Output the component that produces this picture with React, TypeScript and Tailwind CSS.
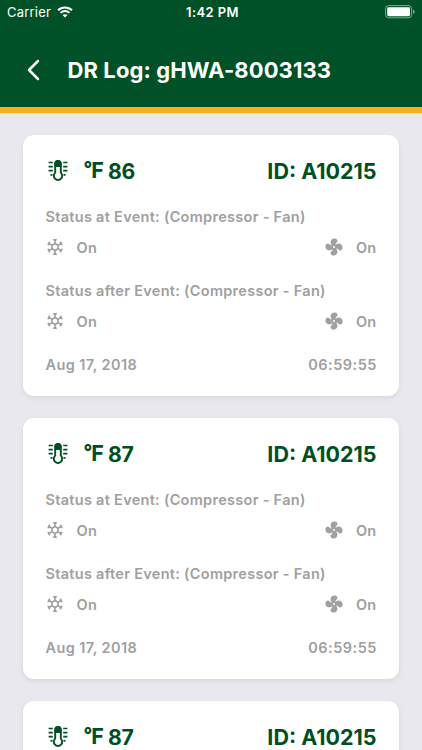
type LogEntry = { temp: number; id: string; date: string; time: string };

const entries: LogEntry[] = [
  { temp: 86, id: "A10215", date: "Aug 17, 2018", time: "06:59:55" },
  { temp: 87, id: "A10215", date: "Aug 17, 2018", time: "06:59:55" },
  { temp: 87, id: "A10215", date: "Aug 17, 2018", time: "06:59:55" },
];

function WifiIcon() {
  return (
    <svg width="16" height="12" viewBox="0 0 16 12" fill="none" stroke="white" strokeWidth="2">
      <path d="M1 4.3C4.9.5 11.1.5 15 4.3" />
      <path d="M3.5 6.9c2.5-2.4 6.5-2.4 9 0" />
      <path d="M8 11.6 5.5 9.1c1.4-1.3 3.6-1.3 5 0z" fill="white" stroke="none" />
    </svg>
  );
}

function BatteryIcon() {
  return (
    <svg width="30" height="14" viewBox="0 0 30 14" fill="none">
      <rect x=".6" y=".6" width="26" height="12.2" rx="3.2" stroke="white" strokeOpacity=".5" />
      <rect x="2.2" y="2.2" width="22.8" height="9" rx="1.4" fill="white" />
      <path d="M28 4.8v4c1-.4 1.5-1.1 1.5-2s-.5-1.6-1.5-2z" fill="white" fillOpacity=".55" />
    </svg>
  );
}

function ThermometerIcon() {
  return (
    <svg width="20" height="22" viewBox="0 0 20 22" fill="none" stroke="currentColor">
      <path d="M7.2 12.6V3.800a2.800 2.800 0 0 1 5.600 0v8.800a4.200 4.200 0 1 1-5.600 0z" fill="white" strokeWidth="1.900" />
      <path d="M6.500 7V3.800a3.500 3.500 0 0 1 7 0V7z" fill="currentColor" stroke="none" />
      <path d="M.6 2.500h4.200M.6 6.600h4.200M.6 10.700h4.200M2.500 14.800h2M15.200 2.500h4.200M15.200 6.600h4.200M15.200 10.700h4.200M15.500 14.800h2" strokeWidth="1.700" />
    </svg>
  );
}

function SnowflakeIcon() {
  return (
    <svg width="18" height="18" viewBox="-9 -9 18 18" fill="none" stroke="currentColor" strokeWidth="1.600">
      <path d="M0-3.500 3-1.750V1.750L0 3.500-3 1.750V-1.750z" />
      {[0, 60, 120, 180, 240, 300].map((angle) => (
        <path key={angle} d="M0-3.200V-8M-1.700-7.600 0-6.200 1.700-7.600" transform={`rotate(${angle})`} />
      ))}
    </svg>
  );
}

function FanIcon() {
  return (
    <svg width="18" height="18" viewBox="-9 -9 18 18" fill="currentColor">
      {[0, 90, 180, 270].map((angle) => (
        <path
          key={angle}
          d="M-1.500-.8C-2.900-2.400-3.400-4.300-3.100-5.800-2.700-7.900-.6-8.500 1.200-8.300 3.500-8 3.900-5.500 2.500-4.500 1.400-3.800 1.200-2.800 1.700-1.200L0 1z"
          stroke="currentColor"
          strokeWidth=".4"
          transform={`rotate(${angle})`}
        />
      ))}
      <circle r="1" fill="white" />
    </svg>
  );
}

function Status({ label }: { label: string }) {
  return (
    <div className="h-[74px]">
      <div className="h-[18px] whitespace-nowrap leading-[18px]">{label}</div>
      <div className="mt-[13px] flex h-[18px] items-center justify-between leading-[18px]">
        <div className="flex items-center gap-[13px]">
          <span className="mb-[2px]"><SnowflakeIcon /></span>
          <span>On</span>
        </div>
        <div className="flex items-center gap-[13px]">
          <span className="mb-[2px]"><FanIcon /></span>
          <span>On</span>
        </div>
      </div>
    </div>
  );
}

function LogCard({ entry }: { entry: LogEntry }) {
  return (
    <article className="h-[261px] shrink-0 rounded-[11px] bg-white px-[22.5px] pt-[22px] text-[14.5px] font-semibold tracking-[0.29px] text-[#a0a0a0] shadow-[0_2px_5px_rgba(0,0,0,0.08)]">
      <div className="flex h-7 items-center justify-between text-[21.5px] font-bold leading-7 tracking-normal text-[#004f23]">
        <div className="flex items-center pl-[2px]">
          <ThermometerIcon />
          <span className="mb-[4px] ml-[16px] text-[19px] font-extrabold tracking-[-1px]">°</span>
          <span className="mb-[3px]">F</span>
          <span className="ml-[4px] text-[21.2px] tracking-[-0.3px]">{entry.temp}</span>
        </div>
        <span>ID: {entry.id}</span>
      </div>
      <div className="pt-[22.5px]">
        <Status label="Status at Event: (Compressor - Fan)" />
        <Status label="Status after Event: (Compressor - Fan)" />
      </div>
      <div className="flex justify-between leading-[18px]">
        <span className="tracking-[0.4px]">{entry.date}</span>
        <span className="-mr-[0.5px] tracking-[0.5px]">{entry.time}</span>
      </div>
    </article>
  );
}

export default function App() {
  return (
    <main className="h-[750px] w-[422px] overflow-hidden bg-[#e8e8ee] font-['Inter','Liberation_Sans',sans-serif]">
      <header className="h-[113px] border-b-[6px] border-[#f7b018] bg-[#005127] text-white">
        <div className="grid h-6 grid-cols-3 items-center pl-[7px] pr-[7px] text-[13px] leading-6">
          <div className="flex items-center gap-[6px] tracking-[0.2px]">
            <span>Carrier</span>
            <WifiIcon />
          </div>
          <span className="pl-[3px] text-center font-semibold tracking-[0.4px]">1:42 PM</span>
          <div className="flex justify-end"><BatteryIcon /></div>
        </div>
        <div className="flex h-[92px] items-center pl-[27px]">
          <svg width="14" height="22" viewBox="0 0 14 22" fill="none" stroke="white" strokeWidth="2.5" strokeLinecap="round" strokeLinejoin="round">
            <path d="M11 2 2 11l9 9" />
          </svg>
          <h1 className="ml-[26.5px] whitespace-nowrap text-[22px] font-bold tracking-[0.1px]">DR Log: gHWA-8003133</h1>
        </div>
      </header>
      <section className="flex flex-col gap-[22px] px-[23px] pt-[22px]">
        {entries.map((entry, index) => <LogCard key={index} entry={entry} />)}
      </section>
    </main>
  );
}
